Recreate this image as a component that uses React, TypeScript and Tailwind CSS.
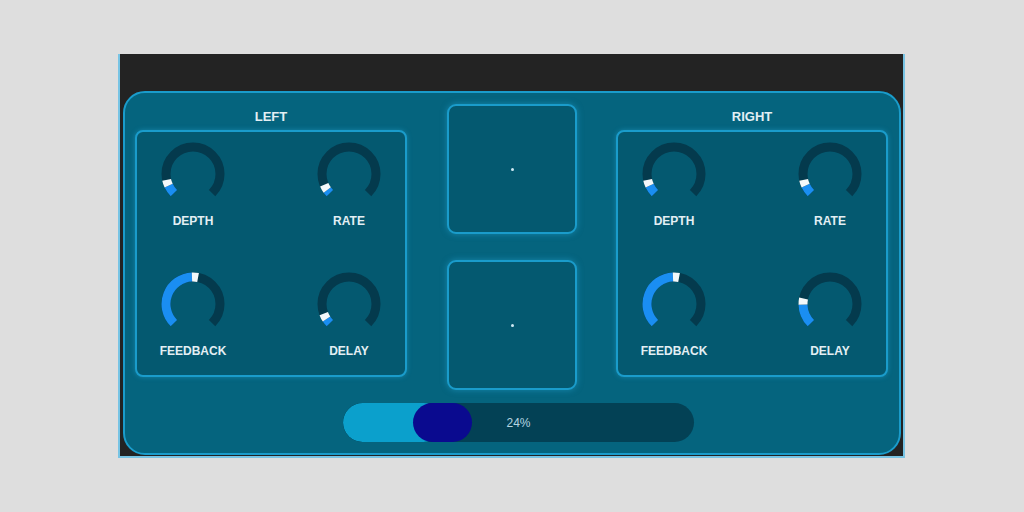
import React from "react";

const CX = 32;
const CY = 32;
const R = 27;

function pt(deg: number): [number, number] {
  const a = (deg * Math.PI) / 180;
  return [CX + R * Math.cos(a), CY + R * Math.sin(a)];
}

function arc(a1: number, a2: number): string {
  const [x1, y1] = pt(a1);
  const [x2, y2] = pt(a2);
  const large = a2 - a1 > 180 ? 1 : 0;
  return `M ${x1.toFixed(2)} ${y1.toFixed(2)} A ${R} ${R} 0 ${large} 1 ${x2.toFixed(2)} ${y2.toFixed(2)}`;
}

function Knob({ v, label }: { v: number; label: string }) {
  const start = 135;
  const end = start + 270 * v;
  const wStart = Math.max(start, end - 13);
  return (
    <div className="flex w-[100px] flex-col items-center">
      <svg width="64" height="64" viewBox="0 0 64 64">
        <path d={arc(135, 405)} fill="none" stroke="#043a4d" strokeWidth="9" />
        {wStart > start && (
          <path d={arc(start, wStart)} fill="none" stroke="#1a8ef2" strokeWidth="9" />
        )}
        <path d={arc(wStart, end)} fill="none" stroke="#f4f8fa" strokeWidth="9" />
      </svg>
      <div className="mt-[8px] whitespace-nowrap text-[12px] font-bold leading-[14px] text-[#e3eff4]">
        {label}
      </div>
    </div>
  );
}

function Section({ title, vals }: { title: string; vals: number[] }) {
  return (
    <div className="flex w-[272px] flex-col">
      <div className="flex h-[26px] items-center justify-center text-[13px] font-bold text-[#e3eff4]">
        {title}
      </div>
      <div className="flex h-[247px] flex-col rounded-[8px] border-2 border-[#1a9ccb] bg-[#045970] pl-[6px] pt-[10px] shadow-[0_0_5px_rgba(40,170,220,0.45)]">
        <div className="flex gap-[56px]">
          <Knob v={vals[0]} label="DEPTH" />
          <Knob v={vals[1]} label="RATE" />
        </div>
        <div className="mt-[44px] flex gap-[56px]">
          <Knob v={vals[2]} label="FEEDBACK" />
          <Knob v={vals[3]} label="DELAY" />
        </div>
      </div>
    </div>
  );
}

function Pad() {
  return (
    <div className="flex h-[130px] w-[130px] items-center justify-center rounded-[9px] border-2 border-[#1a9ccb] bg-[#045970] shadow-[0_0_6px_rgba(40,170,220,0.5)]">
      <div className="h-[3px] w-[3px] rounded-full bg-[#cfe9f3]" />
    </div>
  );
}

export default function App() {
  return (
    <div
      className="h-[512px] w-[1024px] bg-[#dedede] pl-[118px] pt-[54px]"
      style={{ fontFamily: '"Liberation Sans", Arial, sans-serif' }}
    >
      <div className="h-[404px] w-[787px] border-x-2 border-b-2 border-[#78c4e4] bg-[#232323] pb-[1px] pl-[3px] pr-[2px] pt-[37px]">
        <div className="flex h-[364px] w-[778px] flex-col rounded-[22px] border-2 border-[#1a9ccb] bg-[#05647e]">
          <div className="flex pl-[10px] pt-[11px]">
            <Section title="LEFT" vals={[0.12, 0.08, 0.54, 0.09]} />
            <div className="ml-[40px] flex flex-col gap-[26px]">
              <Pad />
              <Pad />
            </div>
            <div className="ml-[39px]">
              <Section title="RIGHT" vals={[0.12, 0.12, 0.54, 0.21]} />
            </div>
          </div>
          <div className="relative ml-[218px] mt-[13px] h-[39px] w-[351px] overflow-hidden rounded-full bg-[#034155]">
            <div className="absolute left-0 top-0 h-full w-[100px] rounded-full bg-[#0ba0cc]" />
            <div className="absolute left-[70px] top-0 h-full w-[59px] rounded-full bg-[#0a0a8f]" />
            <div className="absolute inset-0 flex items-center justify-center text-[12px] text-[#b5d5e0]">
              24%
            </div>
          </div>
        </div>
      </div>
    </div>
  );
}
